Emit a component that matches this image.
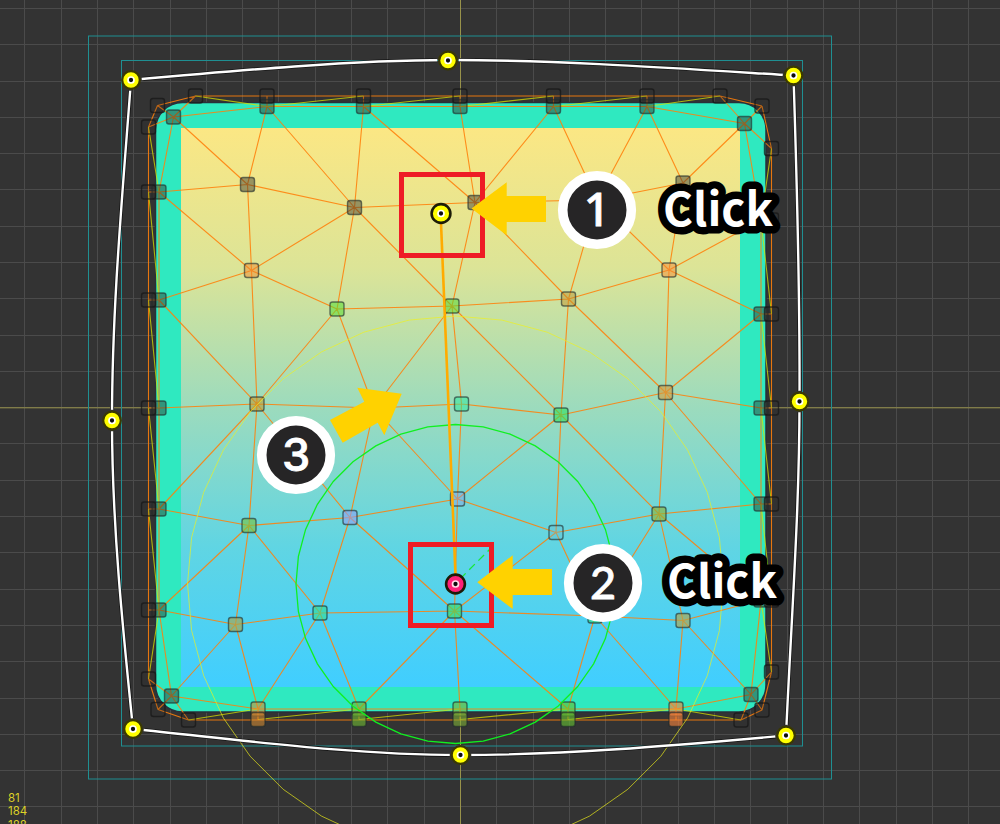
import React from "react";

const LEFT = [192, 300, 408, 509, 610];
const RIGHT = [220, 314, 408, 504, 600];
const TOP = [267, 363.5, 460, 553.5, 647];
const BOTTOM = [258, 359, 460, 568, 676];

const DARK = "rgba(52,50,44,0.46)";
const HOLLOW = "rgba(44,44,44,0.22)";
const BOTTOM_FILL = [
  "rgba(214,140,50,0.58)",
  "rgba(110,182,50,0.62)",
  "rgba(125,175,55,0.6)",
  "rgba(100,190,50,0.62)",
  "rgba(245,130,60,0.62)",
];

// Mesh vertices: [x, y, fill]; a null fill is a vertex with no handle drawn.
const V = {
  tl: [173.5, 117, DARK], tr: [744.5, 123.5, DARK],
  bl: [171.5, 696, DARK], br: [751, 694.5, DARK],
  tl0: [148.5, 127, HOLLOW], tl1: [157.5, 105.5, HOLLOW], tl2: [195.5, 96, HOLLOW],
  tr0: [720, 96, HOLLOW], tr1: [762, 106, HOLLOW], tr2: [771.5, 148.5, HOLLOW],
  br0: [771.5, 672, HOLLOW], br1: [762, 710, HOLLOW], br2: [741, 720, HOLLOW],
  bl0: [188.5, 720, HOLLOW], bl1: [158, 709.5, HOLLOW], bl2: [148.5, 679, HOLLOW],
  v1: [247.5, 184.5, DARK], v2: [354.5, 207.5, DARK], v3: [475, 202.5, DARK],
  v4: [683, 183, DARK], v5: [597, 200, null],
  v6: [251.5, 270.5, "rgba(240,135,45,0.5)"],
  v7: [337, 309, "rgba(90,220,50,0.55)"],
  v8: [452, 306, "rgba(90,215,50,0.55)"],
  v9: [568.5, 299, "rgba(190,145,45,0.5)"],
  v10: [669, 270, "rgba(245,135,50,0.5)"],
  v11: [257, 404, "rgba(190,150,40,0.55)"],
  v12: [374, 408, null],
  v13: [461.5, 404, "rgba(40,235,155,0.5)"],
  v14: [561, 415, "rgba(45,225,95,0.6)"],
  v15: [665.5, 392.5, "rgba(210,155,65,0.62)"],
  v16: [249, 525.5, "rgba(120,195,70,0.65)"],
  v17: [350, 517.5, "rgba(140,160,245,0.6)"],
  v18: [457.5, 499, "rgba(130,160,235,0.42)"],
  v19: [556, 532.5, "rgba(100,190,210,0.35)"],
  v20: [659, 514, "rgba(140,180,60,0.65)"],
  v21: [235.5, 624.5, "rgba(170,165,75,0.65)"],
  v22: [320, 613, "rgba(50,220,150,0.62)"],
  v23: [454.5, 611, "rgba(60,220,105,0.65)"],
  v24: [595, 616, "rgba(40,215,140,0.7)"],
  v25: [683, 620.5, "rgba(180,165,75,0.65)"],
};
LEFT.forEach((y, i) => { V["li" + i] = [159, y, DARK]; V["lo" + i] = [148.5, y, HOLLOW]; });
RIGHT.forEach((y, i) => { V["ri" + i] = [761, y, DARK]; V["ro" + i] = [771.5, y, HOLLOW]; });
TOP.forEach((x, i) => { V["ti" + i] = [x, 106.5, DARK]; V["to" + i] = [x, 96, HOLLOW]; });
BOTTOM.forEach((x, i) => { V["bi" + i] = [x, 709, BOTTOM_FILL[i]]; V["bo" + i] = [x, 719.5, BOTTOM_FILL[i]]; });

const EDGES = `tl-tl0 tl-tl1 tl-tl2 tl-ti0 tl-li0 tl-v1 tr-tr0 tr-tr1 tr-tr2 tr-ti4 tr-ri0 tr-v4
bl-bl0 bl-bl1 bl-bl2 bl-bi0 bl-li4 bl-v21 br-br0 br-br1 br-br2 br-bi4 br-ri4 br-v25
ti0-v1 ti0-v2 ti1-v2 ti1-v3 ti2-v3 ti3-v3 ti3-v5 ti4-v5 ti4-v4 v4-v5 v4-v10 v4-ri0 v10-ri0 v10-ri1
v10-v5 v10-v15 v10-v9 v9-v5 v9-v3 v3-v5 v3-v8 v3-v2 v8-v2 v2-v7 v2-v6 v2-v1 v1-li0 v1-v6 li0-v6
v6-li1 v6-v7 v6-v11 li1-v11 li2-v11 v11-v7 v7-v8 v7-v12 v11-v12 v8-v12 v8-v13 v8-v14 v8-v9 v9-v14
v9-v15 v14-v15 v15-ri1 v15-ri2 v15-ri3 v15-v20 v14-v20 v14-v19 v14-v18 v14-v13 v13-v12 v13-v18
v12-v18 v12-v17 v11-v17 v11-v16 v11-li3 li3-v16 v16-v17 v16-li4 v16-v21 v16-v22 v17-v22 v17-v23
v17-v18 v18-v19 v18-v23 v19-v23 v19-v20 v19-v24 v20-ri3 v20-ri4 v20-v25 v20-v24 v23-v22 v23-v24
v24-v25 li4-v21 v21-bi0 v21-v22 v22-bi0 v22-bi1 v23-bi1 v23-bi2 v23-bi3 v24-bi3 v24-bi4 v25-bi4
v25-ri4 ti0-ti4 bi0-bi4 li0-li4 ri0-ri4 tl0-tl1 tl1-tl2 tl2-tr0 tr0-tr1 tr1-tr2 tr2-br0 br0-br1
br1-br2 br2-bl0 bl0-bl1 bl1-bl2 bl2-tl0
li0-lo0 li1-lo1 li2-lo2 li3-lo3 li4-lo4 ri0-ro0 ri1-ro1 ri2-ro2 ri3-ro3 ri4-ro4
ti0-to0 ti1-to1 ti2-to2 ti3-to3 ti4-to4 bi0-bo0 bi1-bo1 bi2-bo2 bi3-bo3 bi4-bo4`.split(/\s+/);

const SEAMS = `tl2-ti0 ti0-to1 ti1-to2 ti2-to3 ti3-to4 ti4-tr0 tl0-li0 lo0-li1 lo1-li2 lo2-li3 lo3-li4 li4-bl2
tr2-ri0 ri0-ro1 ri1-ro2 ri2-ro3 ri3-ro4 ri4-br0 bl0-bi0 bo0-bi1 bo1-bi2 bo2-bi3 bo3-bi4 bi4-br2`.split(/\s+/);

const toPath = (pairs) =>
  pairs
    .map((p) => {
      const [a, b] = p.split("-");
      return `M${V[a][0]} ${V[a][1]}L${V[b][0]} ${V[b][1]}`;
    })
    .join("");

const ring = (cx, cy, r) =>
  Array.from({ length: 36 }, (_, i) => {
    const a = (i * Math.PI) / 18;
    return `${(cx + r * Math.sin(a)).toFixed(1)},${(cy - r * Math.cos(a)).toFixed(1)}`;
  }).join(" ");

const HANDLES = [
  [131, 80], [448, 60.5], [793.5, 75.5], [799.5, 401.5],
  [786, 735.5], [460.5, 755], [133, 729], [112, 420.5],
];

const WARP =
  "M131 80C237 70.5 355 60 448 60C560 60 680 68.5 793.5 75.5C797 184 800 293 799.5 401C799.5 512 791 624 786 735.5C678 745 569 755 460.5 755C351 755 242 740 133 729C122.5 626 112 523 112 420.5C112 307 122.5 194 131 80Z";

const GRID_X = Array.from({ length: 27 }, (_, i) => 24.9 + i * 36.3);
const GRID_Y = Array.from({ length: 23 }, (_, i) => 8.4 + i * 36.3);

function Handle({ x, y, bold, color = "#ffff00", dot = "#fff" }) {
  return (
    <g>
      <circle cx={x} cy={y} r={bold ? 9.4 : 8.8} fill={color} stroke={bold ? "#1c1c08" : "#3a3902"} strokeWidth={bold ? 2.6 : 2.2} />
      <circle cx={x} cy={y} r="3" fill="#0c0c0c" stroke={dot} strokeWidth="1.7" />
    </g>
  );
}

function Step({ x, y, n, className }) {
  return (
    <g>
      <circle cx={x} cy={y} r="34.3" fill="#262526" stroke="#fff" strokeWidth="9.6" />
      <text x={x} y={y + 16} textAnchor="middle" fill="#fff" stroke="#fff" strokeWidth="0.8" className={className}>{n}</text>
    </g>
  );
}

function ClickLabel({ x, y }) {
  return (
    <g className="font-['Noto_Sans_CJK_JP','Noto_Sans',sans-serif] text-[46px] font-bold">
      <text
        x={x}
        y={y}
        textLength="110"
        lengthAdjust="spacingAndGlyphs"
        fill="#fff"
        stroke="#000"
        strokeWidth="15"
        strokeLinejoin="round"
        paintOrder="stroke"
      >
        Click
      </text>
    </g>
  );
}

export default function App() {
  return (
    <main className="relative h-[824px] w-[1000px] overflow-hidden bg-[#333333]">
      <svg viewBox="0 0 1000 824" className="block h-[824px] w-[1000px]" fill="none">
        <defs>
          <linearGradient id="sky" x1="0" y1="0" x2="0" y2="1">
            <stop offset="0" stopColor="#fbe784" />
            <stop offset="0.25" stopColor="#dce497" />
            <stop offset="0.5" stopColor="#9cdbbd" />
            <stop offset="0.75" stopColor="#60d5e3" />
            <stop offset="1" stopColor="#40ceff" />
          </linearGradient>
          <mask id="gaps" maskUnits="userSpaceOnUse" x="0" y="0" width="1000" height="824">
            <rect width="1000" height="824" fill="#fff" />
            {HANDLES.map(([x, y]) => <circle key={x} cx={x} cy={y} r="10.8" fill="#000" />)}
          </mask>
        </defs>

        <g stroke="#4b4b4b">
          {GRID_X.map((x) => <path key={x} d={`M${Math.floor(x) + 0.5} 0V824`} />)}
          {GRID_Y.map((y) => <path key={y} d={`M0 ${Math.floor(y) + 0.5}H1000`} />)}
        </g>
        <path d="M460.5 0V824M0 407.8H1000" stroke="#98924a" />

        <rect x="155.5" y="102.5" width="610.5" height="609.5" rx="27" fill="#2fe9c0" stroke="#29303a" strokeWidth="1.5" />
        <rect x="181" y="128" width="559" height="559" fill="url(#sky)" />

        <g stroke="#1f8f92">
          <rect x="88.5" y="36" width="743" height="743" />
          <rect x="121.5" y="60.5" width="681" height="685.5" />
        </g>

        <path d={toPath(EDGES)} stroke="#ff7f0a" strokeOpacity="0.88" strokeWidth="1.1" />
        <path d={toPath(SEAMS)} stroke="#d8e000" strokeOpacity="0.75" strokeWidth="1.1" />

        {Object.entries(V).map(([k, [x, y, fill]]) =>
          fill ? (
            <rect
              key={k}
              x={x - 7}
              y={y - 7}
              width="14"
              height="14"
              rx="2.5"
              fill={fill}
              stroke={fill === HOLLOW ? "#161616" : "#1e2a2a"}
              strokeOpacity={fill === HOLLOW ? 0.72 : 0.62}
              strokeWidth="1.4"
            />
          ) : null
        )}

        <polygon points={ring(455.5, 584, 268)} stroke="#f2f218" strokeOpacity="0.66" />
        <polygon points={ring(455.5, 584, 159.5)} stroke="#10f020" strokeWidth="1.3" />

        <g mask="url(#gaps)">
          <path d={WARP} stroke="#161616" strokeWidth="4" />
          <path d={WARP} stroke="#fff" strokeWidth="2.4" />
        </g>
        {HANDLES.map(([x, y]) => <Handle key={x} x={x} y={y} />)}

        <path d="M441 223L455.5 575" stroke="#ffab00" strokeWidth="2.6" />
        <path d="M460 579L495 544" stroke="#18e838" strokeWidth="1.3" strokeDasharray="8 5" />
        <Handle x={441} y={213.5} bold />
        <Handle x={455.5} y={584} bold color="#ff1f77" dot="#ffd9e6" />

        <g stroke="#ee1c25" strokeWidth="5">
          <rect x="401.5" y="174.5" width="81" height="81" />
          <rect x="410.5" y="544.5" width="81" height="81" />
        </g>

        <g fill="#ffd200">
          <path d="M471.5 208.5L506.7 182.3V196H546V222H506.7V235.2Z" />
          <path d="M477.3 582.3L512.7 555.3V569H552V595H512.7V609Z" />
          <path d="M401.7 393.7L357.3 387.7L364.3 401.7L330 420L342.7 442.7L377.7 422.7L384.3 435.3Z" />
        </g>

        <Step x={597} y={210} n="1" className="font-['Noto_Sans',sans-serif] text-[46px] font-medium" />
        <Step x={603} y={583} n="2" className="font-['Lato',sans-serif] text-[45px] font-medium" />
        <Step x={296} y={455} n="3" className="font-['Inter',sans-serif] text-[45px] font-medium" />
        <ClickLabel x={663} y={225.5} />
        <ClickLabel x={667} y={597.5} />
      </svg>

      <div className="absolute left-2 top-[791.5px] font-['Inter',sans-serif] text-[11.5px] leading-[13.5px] text-[#ddd127]">
        <div>81</div>
        <div>184</div>
        <div>188</div>
      </div>
    </main>
  );
}
